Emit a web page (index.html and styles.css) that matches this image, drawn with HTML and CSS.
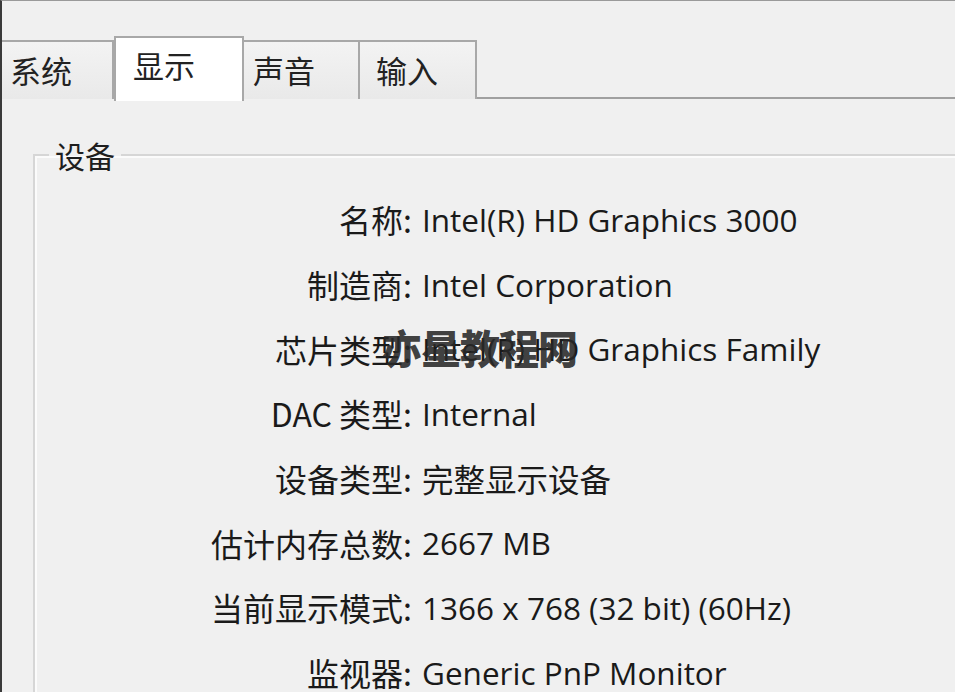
FILE: index.html
```html
<!DOCTYPE html>
<html lang="zh-CN">
<head>
    <meta charset="UTF-8">
    <meta name="viewport" content="width=device-width, initial-scale=1.0">
    <title>DirectX 诊断工具 - 显示</title>
    <link rel="stylesheet" href="styles.css">
</head>
<body>
    <div class="window">
        <div class="tabs">
            <div class="tab tab-system">系统</div>
            <div class="tab tab-display active">显示</div>
            <div class="tab tab-sound">声音</div>
            <div class="tab tab-input">输入</div>
        </div>

        <fieldset class="group">
            <legend>设备</legend>
            <div class="info-grid">
                <div class="label">名称:</div>
                <div class="value">Intel(R) HD Graphics 3000</div>

                <div class="label">制造商:</div>
                <div class="value">Intel Corporation</div>

                <div class="label">芯片类型:</div>
                <div class="value">Intel(R) HD Graphics Family</div>

                <div class="label">DAC 类型:</div>
                <div class="value">Internal</div>

                <div class="label">设备类型:</div>
                <div class="value">完整显示设备</div>

                <div class="label">估计内存总数:</div>
                <div class="value">2667 MB</div>

                <div class="label">当前显示模式:</div>
                <div class="value">1366 x 768 (32 bit) (60Hz)</div>

                <div class="label">监视器:</div>
                <div class="value">Generic PnP Monitor</div>
            </div>
        </fieldset>

        <!-- 图片水印 -->
        <div class="watermark">亦星教程网</div>
    </div>
</body>
</html>
```

FILE: styles.css
```css
html, body {
    margin: 0;
    padding: 0;
}
body {
    background-color: #f0f0f0;
    font-family: "Noto Sans", "Open Sans", "Noto Sans CJK SC", sans-serif;
    color: #1a1a1a;
    overflow: hidden;
}
.window {
    position: relative;
    height: 692px;
    border-top: 1px solid #9a9a9a;
    border-left: 2px solid #3a3a3a;
    box-sizing: border-box;
    overflow: hidden;
}
.tabs {
    display: flex;
    align-items: flex-end;
    height: 98px;
    border-bottom: 2px solid #a0a0a0;
    box-sizing: border-box;
}
.tab {
    height: 59px;
    margin-bottom: -2px;
    box-sizing: border-box;
    border: 2px solid #a8a8a8;
    border-bottom: none;
    border-left-width: 0;
    background: linear-gradient(#f3f3f3, #e9e9e9);
    font-family: "Noto Sans CJK SC", sans-serif;
    font-size: 31px;
    line-height: 56px;
    padding-left: 10px;
    color: #222;
}
.tab-system {
    width: 112px;
    padding-left: 8px;
}
.tab-display {
    width: 130px;
}
.tab-sound {
    width: 116px;
    padding-left: 9px;
}
.tab-input {
    width: 117px;
    padding-left: 16px;
}
.tab.active {
    height: 65px;
    margin-bottom: -4px;
    background: #fff;
    border-left-width: 2px;
    padding-left: 17px;
    line-height: 54px;
    z-index: 1;
}
.group {
    margin: 38px 0 0 31px;
    padding: 14px 0 0 0;
    border: none;
    border-top: 2px solid #d6d6d6;
    border-left: 2px solid #d6d6d6;
    box-shadow: inset 2px 2px 0 #fbfbfb;
    min-width: 0;
}
.group legend {
    margin-left: 14px;
    padding: 0 6px;
    font-family: "Noto Sans CJK SC", sans-serif;
    font-size: 30px;
    line-height: 36px;
    color: #1e1e1e;
}
.info-grid {
    display: grid;
    grid-template-columns: 377px auto;
    grid-auto-rows: 64.7px;
    column-gap: 10px;
    align-items: center;
}
.label {
    text-align: right;
    font-family: "Noto Sans CJK SC", sans-serif;
    font-size: 32px;
    white-space: nowrap;
}
.value {
    font-family: "Open Sans", "Noto Sans CJK SC", sans-serif;
    font-size: 31.5px;
    white-space: nowrap;
}
.watermark {
    position: absolute;
    left: 380px;
    top: 322px;
    font-family: "Noto Sans CJK SC", sans-serif;
    font-weight: 900;
    font-size: 40px;
    line-height: 48px;
    letter-spacing: -1px;
    color: rgba(40, 40, 40, 0.9);
}
```
